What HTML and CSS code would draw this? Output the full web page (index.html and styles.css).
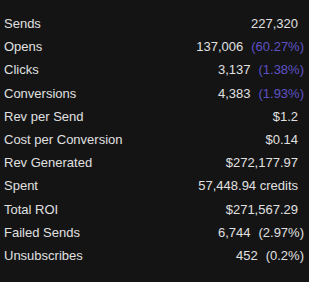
FILE: index.html
```html
<!DOCTYPE html>
<html>
<head>
<meta charset="utf-8">
<link rel="stylesheet" href="styles.css">
</head>
<body>
<div class="stats">
  <div class="row"><span class="label">Sends</span><span class="value solo">227,320</span></div>
  <div class="row"><span class="label">Opens</span><span class="value">137,006<span class="pct accent">(60.27%)</span></span></div>
  <div class="row"><span class="label">Clicks</span><span class="value">3,137<span class="pct accent">(1.38%)</span></span></div>
  <div class="row"><span class="label">Conversions</span><span class="value">4,383<span class="pct accent">(1.93%)</span></span></div>
  <div class="row"><span class="label">Rev per Send</span><span class="value solo">$1.2</span></div>
  <div class="row"><span class="label">Cost per Conversion</span><span class="value solo">$0.14</span></div>
  <div class="row"><span class="label">Rev Generated</span><span class="value solo">$272,177.97</span></div>
  <div class="row"><span class="label">Spent</span><span class="value solo">57,448.94 credits</span></div>
  <div class="row"><span class="label">Total ROI</span><span class="value solo">$271,567.29</span></div>
  <div class="row"><span class="label">Failed Sends</span><span class="value">6,744<span class="pct">(2.97%)</span></span></div>
  <div class="row"><span class="label">Unsubscribes</span><span class="value">452<span class="pct">(0.2%)</span></span></div>
</div>
</body>
</html>
```
FILE: styles.css
```css
html, body {
  margin: 0;
  padding: 0;
  background: #141415;
  height: 100%;
}
body {
  font-family: "Liberation Sans", Arial, sans-serif;
  font-size: 13px;
  color: #e0e0e0;
}
.stats {
  display: flex;
  flex-direction: column;
  padding: 12px 5px 0 4px;
}
.row {
  display: flex;
  justify-content: space-between;
  align-items: center;
  height: 23.2px;
}
.value {
  display: flex;
  gap: 8px;
}
.value.solo {
  margin-right: 6px;
}
.accent {
  color: #5d52c4;
}
```
